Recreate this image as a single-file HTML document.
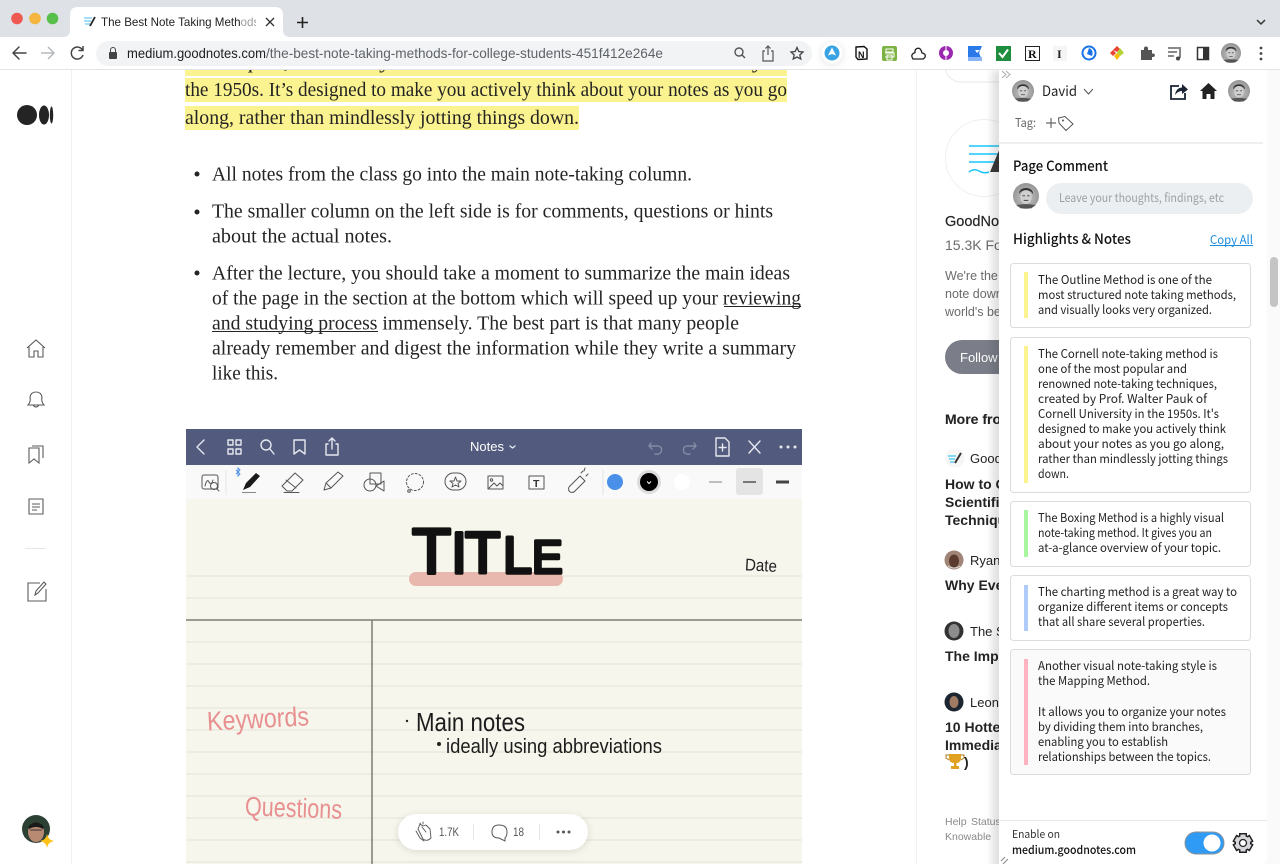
<!DOCTYPE html>
<html><head><meta charset="utf-8"><title>The Best Note Taking Methods</title>
<style>html,body{margin:0;padding:0;background:#fff;width:1280px;height:864px;overflow:hidden}svg{display:block}
text{font-family:"Liberation Sans",sans-serif}
.s text,text.s{font-family:"Liberation Serif",serif;font-size:20px;fill:#242424}
.k text,text.k{font-family:"Noto Sans CJK KR","Liberation Sans",sans-serif}
.i{fill:none;stroke:#5b5b5b;stroke-width:1.1}
.w{fill:none;stroke:#e6e8ef;stroke-width:1.4;stroke-linecap:round;stroke-linejoin:round}
.t{fill:none;stroke:#555;stroke-width:1;stroke-linecap:round;stroke-linejoin:round}
.c{fill:none;stroke:#444;stroke-width:1.5;stroke-linecap:round;stroke-linejoin:round}
.h{paint-order:stroke;stroke:#f6f6ec;stroke-width:.5}
</style></head><body>
<svg width="1280" height="864" viewBox="0 0 1280 864" xmlns="http://www.w3.org/2000/svg">
<defs>
<radialGradient id="fg" cx=".5" cy=".55" r=".6"><stop offset="0" stop-color="#c8c8c8"/><stop offset="1" stop-color="#8f8f8f"/></radialGradient>
<g id="face"><circle r="1" fill="url(#fg)"/><path d="M-.52-.15C-.6-.75.55-.78.55-.15L.42-.3C.2-.5-.2-.5-.42-.3Z" fill="#333"/><ellipse cy=".08" rx=".44" ry=".52" fill="#cfcfcf"/><path d="M-.28-.02H-.08M.08-.02H.28M-.18.34H.18" stroke="#555" stroke-width=".08" fill="none"/><path d="M-.75.7Q0 .55.75.7L.4.95H-.4Z" fill="#555"/></g>
<clipPath id="pc"><rect x="0" y="70" width="999" height="794"/></clipPath>
<clipPath id="ic"><rect x="186" y="429" width="616" height="435"/></clipPath>
<clipPath id="tc"><rect x="100" y="10" width="156" height="24"/></clipPath>
<filter id="sh" x="-20%" y="-20%" width="140%" height="140%"><feGaussianBlur stdDeviation="4"/></filter>
</defs>

<!-- article -->
<rect width="1280" height="864" fill="#fff"/>
<rect x="185" y="52" width="602" height="24" fill="#fbf38f"/><rect x="185" y="78" width="602" height="24" fill="#fbf38f"/><rect x="185" y="106" width="394" height="24" fill="#fbf38f"/>
<g class="s">
<text x="185" y="68" textLength="602" lengthAdjust="spacingAndGlyphs">techniques, created by Prof. Walter Pauk of Cornell University in</text>
<text x="185" y="96" textLength="602" lengthAdjust="spacingAndGlyphs">the 1950s. It’s designed to make you actively think about your notes as you go</text>
<text x="185" y="124" textLength="394" lengthAdjust="spacingAndGlyphs">along, rather than mindlessly jotting things down.</text>
<text x="212" y="180.500" textLength="480" lengthAdjust="spacingAndGlyphs">All notes from the class go into the main note-taking column.</text>
<text x="212" y="217.500" textLength="561" lengthAdjust="spacingAndGlyphs">The smaller column on the left side is for comments, questions or hints</text>
<text x="212" y="242.500" textLength="180" lengthAdjust="spacingAndGlyphs">about the actual notes.</text>
<text x="212" y="279.500" textLength="578" lengthAdjust="spacingAndGlyphs">After the lecture, you should take a moment to summarize the main ideas</text>
<text x="212" y="304.500" textLength="589" lengthAdjust="spacingAndGlyphs">of the page in the section at the bottom which will speed up your reviewing</text>
<text x="212" y="329.500" textLength="527" lengthAdjust="spacingAndGlyphs">and studying process immensely. The best part is that many people</text>
<text x="212" y="354.500" textLength="584" lengthAdjust="spacingAndGlyphs">already remember and digest the information while they write a summary</text>
<text x="212" y="379.500" textLength="66" lengthAdjust="spacingAndGlyphs">like this.</text>
</g>
<path d="M724 306.500H801M212 331.500H378" stroke="#242424" stroke-width="1"/>
<circle cx="197" cy="174" r="2.500" fill="#242424"/><circle cx="197" cy="212" r="2.500" fill="#242424"/><circle cx="197" cy="273" r="2.500" fill="#242424"/>

<!-- left rail -->
<rect x="71" y="70" width="1" height="794" fill="#f0f0f0"/>
<circle cx="27" cy="115" r="10" fill="#242424"/><ellipse cx="44" cy="115" rx="5" ry="9.500" fill="#242424"/><ellipse cx="51.500" cy="115" rx="1.700" ry="8.500" fill="#242424"/>
<path class="i" d="M27 348L36 340L45 348M29 346V357H34V351H38V357H43V346"/>
<path class="i" d="M28 405Q31 402 30 397Q31 392 36 392Q41 392 42 397Q41 402 44 405ZM33 405Q36 409 39 405"/>
<path class="i" d="M29 448H39V463L34 459L29 463ZM32 446H43V458"/>
<path class="i" d="M29 499H43V514H29ZM32 504H40M32 507H40M32 510H37"/>
<rect x="25" y="548" width="21" height="1" fill="#e6e6e6"/>
<path class="i" d="M40 583H28V601H46V589M35 595L36 591L44 582L46 584L38 593Z"/>
<circle cx="36" cy="829" r="14" fill="#2c4034"/><ellipse cx="36" cy="832" rx="8" ry="10" fill="#b98a72"/><path d="M28 827Q36 817 44 827L43 829Q36 825 29 829Z" fill="#1a1a1a"/><path d="M30 830H42" stroke="#333"/><path d="M47 834Q48 840 54 841Q48 842 47 848Q46 842 40 841Q46 840 47 834Z" fill="#ffc017"/>

<!-- note image -->
<g clip-path="url(#ic)">
<rect x="186" y="429" width="616" height="36" fill="#525b7d"/>
<rect x="186" y="465" width="616" height="34" fill="#f9f9f9"/>
<rect x="186" y="499" width="616" height="365" fill="#f6f6ec"/>
<path d="M186 576H802M186 598H802M186 642H802M186 664H802M186 686H802M186 708H802M186 730H802M186 752H802M186 774H802M186 796H802M186 818H802M186 840H802M186 862H802" stroke="#e8e8de" stroke-width="1.500"/>
<path d="M186 620H802" stroke="#7d7d75" stroke-width="1.500"/><path d="M372 620V864" stroke="#7d7d75" stroke-width="1.500"/>
<rect x="409" y="572" width="154" height="14" rx="7" fill="#e8b8ae"/>
<text y="573" fill="#111" stroke="#111" stroke-width="3.500" stroke-linejoin="round"><tspan x="412" font-size="64">T</tspan><tspan x="451" font-size="58">I</tspan><tspan x="465" font-size="58">T</tspan><tspan x="503" font-size="52">L</tspan><tspan x="532" font-size="46">E</tspan></text>
<text x="745" y="571" textLength="32" lengthAdjust="spacingAndGlyphs" font-size="17" fill="#222" class="h" transform="rotate(3 760 565)">Date</text>
<text x="207" y="728" textLength="102" lengthAdjust="spacingAndGlyphs" font-size="27" fill="#e88f90" class="h" transform="rotate(-3 258 720)">Keywords</text>
<text x="245" y="817" textLength="97" lengthAdjust="spacingAndGlyphs" font-size="27" fill="#e88f90" class="h" transform="rotate(2 293 810)">Questions</text>
<circle cx="407" cy="721" r="1.200" fill="#222"/>
<text x="416" y="731" textLength="109" lengthAdjust="spacingAndGlyphs" font-size="26" fill="#1c1c1c" class="h">Main notes</text>
<circle cx="439" cy="744" r="2" fill="#222"/>
<text x="446" y="753" textLength="216" lengthAdjust="spacingAndGlyphs" font-size="20" fill="#1c1c1c" class="h">ideally using abbreviations</text>
<!-- header icons -->
<path class="w" d="M204 440L197 447L204 454"/>
<path class="w" d="M228 440H233V445H228ZM236 440H241V445H236ZM228 449H233V454H228ZM236 449H241V454H236Z"/>
<circle class="w" cx="266" cy="445" r="5"/><path class="w" d="M270 449L274 454"/>
<path class="w" d="M294 440H305V454L299.500 450L294 454Z" /><path class="w" d="M332 438V449M329 441L332 438L335 441M328 444H326V455H338V444H336"/>
<text x="470" y="451" font-size="12.500" fill="#fff" textLength="34" lengthAdjust="spacingAndGlyphs">Notes</text><path class="w" d="M510 446L512.500 448L515 446" stroke-width="1"/>
<path class="w" d="M651 443L649 446L652 449M649 446H658Q663 447 661 452Q659 455 655 454" style="stroke:#858ca6"/>
<path class="w" d="M694 443L696 446L693 449M696 446H687Q682 447 684 452Q686 455 690 454" style="stroke:#858ca6"/>
<path class="w" d="M716 438H725L729 442V456H716ZM722.500 444V451M719 447.500H726"/>
<path class="w" d="M749 441L760 453M760 441L749 453"/>
<circle cx="781" cy="447" r="1.500" fill="#e6e8ef"/><circle cx="788" cy="447" r="1.500" fill="#e6e8ef"/><circle cx="795" cy="447" r="1.500" fill="#e6e8ef"/>
<!-- tool icons -->
<rect x="202" y="475" width="16" height="14" rx="2" class="t"/><path d="M205 486Q207 478 209 482T213 480" class="t" stroke-width="1.500"/><circle cx="214" cy="486" r="3.500" class="t" fill="#f9f9f9"/><path class="t" d="M216.500 488.500L219 491"/>
<path d="M236 470L240 474L238 476V468L240 470L236 474" stroke="#4a90e2" stroke-width=".9" fill="none"/>
<path d="M243 490L246 483L256 473L260 476L250 487Z" fill="#1a1a1a"/><path d="M242 492.500H256" stroke="#888"/>
<path class="t" d="M282 486L295 473L303 480L292 491H287ZM286 480L296 488M284 492.500H299"/>
<path class="t" d="M324 490L326 483L338 472L343 476L331 488ZM326 483L331 488"/>
<rect class="t" x="370" y="473" width="11" height="11"/><circle class="t" cx="370" cy="485" r="6" fill="#f9f9f9"/><path class="t" d="M384 481L376 486L384 491Z"/>
<circle class="t" cx="415" cy="482" r="8.500" stroke-dasharray="2 2"/><circle class="t" cx="409" cy="491" r="1.300"/>
<rect class="t" x="445" y="473" width="21" height="17" rx="8.500"/><path class="t" d="M455.500 477L457 481H461L458 483.500L459 487L455.500 485L452 487L453 483.500L450 481H454Z"/>
<rect class="t" x="488" y="476" width="15" height="13"/><circle class="t" cx="491.500" cy="480" r="1.200"/><path class="t" d="M489 488L494 483L497 486L500 483L503 486"/>
<rect class="t" x="529" y="476" width="15" height="13"/><text x="533" y="487" font-size="10.500" font-weight="700" fill="#333">T</text>
<path class="t" d="M569 487L580 476L585 481L574 492Q571 493 569.500 491.500Q568 490 569 487ZM581 473L583 471M586 476L588 474M584 471L585 468"/>
<path d="M603 470V495" stroke="#e4e4e4"/><path d="M226 470V495" stroke="#e8e8e8"/>
<circle cx="615" cy="482" r="8" fill="#4a90e8"/>
<circle cx="649" cy="482" r="12" fill="#dcdcdc"/><circle cx="649" cy="482" r="9" fill="#000"/><path d="M647 481.500L649 483.500L651 481.500" stroke="#fff" fill="none"/>
<circle cx="682" cy="482" r="8" fill="#fff"/>
<path d="M709 482H722" stroke="#aaa" stroke-width="1.500"/>
<rect x="736" y="468" width="27" height="27" rx="3" fill="#e4e4e4"/><path d="M743 482H756" stroke="#777" stroke-width="2"/>
<path d="M776 482H789" stroke="#444" stroke-width="3"/>
</g>
<!-- clap bar -->
<rect x="398" y="816" width="190" height="35" rx="17.500" fill="#000" opacity=".12" filter="url(#sh)"/>
<rect x="398" y="814" width="190" height="36" rx="18" fill="#fff"/>
<path d="M418 829L423 839Q427 842 431 838L430 829L426 825L423 826L420 824ZM422 827L426 832M416 831L420 838L424 841M423 822V824M420 823L421 825" fill="none" stroke="#555" stroke-width=".9" stroke-linecap="round" stroke-linejoin="round"/>
<text x="439" y="836" font-size="11.500" fill="#555" textLength="20" lengthAdjust="spacingAndGlyphs">1.7K</text>
<path d="M473.500 824V840M539.500 824V840" stroke="#e6e6e6"/>
<path d="M499 838Q492 838 492 832Q492 825 499 825Q507 825 507 832Q507 836 505 838L505 841Z" fill="none" stroke="#555"/>
<text x="513" y="836" font-size="11.500" fill="#555" textLength="11" lengthAdjust="spacingAndGlyphs">18</text>
<circle cx="558" cy="832" r="1.500" fill="#555"/><circle cx="563.500" cy="832" r="1.500" fill="#555"/><circle cx="569" cy="832" r="1.500" fill="#555"/>

<!-- right sidebar -->
<rect x="916" y="70" width="1" height="794" fill="#f0f0f0"/>
<rect x="945" y="50" width="70" height="32" rx="16" fill="none" stroke="#e8e8e8"/>
<circle cx="984" cy="158" r="38.500" fill="#fff" stroke="#efefef"/>
<path d="M969 146H1000M969 154H1000M969 162H996M969 172Q974 168 979 171T989 172" stroke="#19c5fb" stroke-width="1.500" fill="none"/>
<path d="M990 172L1000 148V172Z" fill="#3a3a3a"/>
<g fill="#242424">
<text x="945" y="226" font-size="14.500" stroke="#242424" stroke-width=".2">GoodNotes</text>
<text x="945" y="250" font-size="14" fill="#6b6b6b">15.3K Followers</text>
<text x="945" y="280" font-size="12.500" fill="#6b6b6b">We're the</text>
<text x="945" y="298" font-size="12.500" fill="#6b6b6b">note down</text>
<text x="945" y="316" font-size="12.500" fill="#6b6b6b">world's best</text>
<rect x="945" y="340" width="90" height="34" rx="17" fill="#7b7e89"/>
<text x="960" y="362" font-size="13" fill="#fff">Follow</text>
<text x="945" y="424" font-size="14" font-weight="700" stroke="#242424" stroke-width=".1">More from</text>
<circle cx="955" cy="458" r="9.500" fill="#f6f6f6"/><path d="M948 456H956M949 459H955M950 462H954" stroke="#3cc8f5" stroke-width="1.200"/><path d="M955 463L961 453" stroke="#333" stroke-width="2"/>
<text x="970" y="463" font-size="13">GoodNotes</text>
<text x="945" y="489" font-size="14" font-weight="700">How to Get</text>
<text x="945" y="507" font-size="14" font-weight="700">Scientific</text>
<text x="945" y="525" font-size="14" font-weight="700">Techniques</text>
<circle cx="954" cy="560" r="9.500" fill="#a08576"/><ellipse cx="954" cy="561" rx="5" ry="6.500" fill="#5a3b2e"/><path d="M948 566Q954 570 960 566" stroke="#ddd" fill="none"/>
<text x="970" y="565" font-size="13">Ryan Holiday</text>
<text x="945" y="590" font-size="14" font-weight="700">Why Every</text>
<circle cx="954" cy="631" r="9.500" fill="#333"/><ellipse cx="954" cy="631" rx="5.500" ry="7" fill="#8d8d8d"/>
<text x="970" y="636" font-size="13">The Science</text>
<text x="945" y="661" font-size="14" font-weight="700">The Impact</text>
<circle cx="954" cy="702" r="9.500" fill="#1c2530"/><ellipse cx="954" cy="702" rx="4.500" ry="6" fill="#a17a64"/>
<text x="970" y="707" font-size="13">Leon Zhang</text>
<text x="945" y="732" font-size="14" font-weight="700">10 Hottest</text>
<text x="945" y="750" font-size="14" font-weight="700">Immediately</text>
<path d="M949 754H961V759Q960 763 956.500 763V766H959V769H951V766H954V763Q950 763 949 759Z" fill="#e0a020"/><path d="M949 755H946V758L949 760M961 755H964V758L961 760" stroke="#a87718" fill="none"/>
<text x="964" y="767" font-size="14" font-weight="700">)</text>
<text x="945" y="825" font-size="10.500" fill="#8a8a8a">Help</text><text x="971" y="825" font-size="10.500" fill="#8a8a8a">Status</text>
<text x="945" y="840" font-size="10.500" fill="#8a8a8a">Knowable</text>
</g>

<!-- right gutter + scrollbar -->
<rect x="1263" y="70" width="17" height="794" fill="#fafafa"/>
<rect x="1270" y="257" width="8" height="50" rx="4" fill="#c4c4c4"/>

<!-- extension panel -->
<rect x="992" y="70" width="275" height="800" fill="#000" opacity=".12" filter="url(#sh)" clip-path="url(#pc)"/>
<path d="M999 70H1267V858Q1267 864 1261 864H999Z" fill="#fff"/>
<path d="M1002 71L1006 74.500L1002 78M1006 71L1010 74.500L1006 78" fill="none" stroke="#aaa"/>
<use href="#face" transform="translate(1023 91) scale(11)"/>
<text class="k" x="1042" y="96" font-size="14" fill="#222" textLength="35" lengthAdjust="spacingAndGlyphs">David</text>
<path d="M1084 89L1088.500 94L1093 89" fill="none" stroke="#555"/>
<path d="M1179 86H1171V99H1185V93" fill="none" stroke="#1a2433" stroke-width="1.800"/><path d="M1175 95Q1176 88 1182 87.500V84L1188 89.500L1182 94V91Q1178 91 1175 95Z" fill="#1a2433"/>
<path d="M1208.500 83L1217 91H1214.500V99H1210.500V94H1206.500V99H1202.500V91H1200Z" fill="#222"/>
<use href="#face" transform="translate(1239 91) scale(11)"/>
<text class="k" x="1015" y="127" font-size="12" fill="#666" textLength="21" lengthAdjust="spacingAndGlyphs">Tag:</text>
<path d="M1046 123H1056M1051 118V128" stroke="#666" stroke-width="1.200"/>
<path d="M1058.500 118L1065 116.500L1073 124L1066 130.500L1059 123Z" fill="none" stroke="#555"/><circle cx="1063" cy="120.500" r="1" fill="#555"/>
<rect x="999" y="142" width="264" height="2" fill="#efefef"/>
<text class="k" x="1013" y="171" font-size="14" font-weight="500" fill="#111" textLength="95" lengthAdjust="spacingAndGlyphs">Page Comment</text>
<use href="#face" transform="translate(1026 196) scale(13)"/>
<rect x="1046" y="183" width="207" height="31" rx="15.500" fill="#eceff1"/>
<text class="k" x="1059" y="202" font-size="12" fill="#9aa0a6" textLength="165" lengthAdjust="spacingAndGlyphs">Leave your thoughts, findings, etc</text>
<text class="k" x="1013" y="244" font-size="14" font-weight="500" fill="#111" textLength="118" lengthAdjust="spacingAndGlyphs">Highlights &amp; Notes</text>
<text class="k" x="1210" y="244" font-size="12" fill="#1a8cdf" textLength="43" lengthAdjust="spacingAndGlyphs">Copy All</text>
<path d="M1210 245.500H1253" stroke="#1a8cdf"/>

<g stroke="#dcdcdc" fill="#fff">
<rect x="1010.500" y="263.500" width="240" height="64" rx="3"/>
<rect x="1010.500" y="337.500" width="240" height="155" rx="3"/>
<rect x="1010.500" y="501.500" width="240" height="65" rx="3"/>
<rect x="1010.500" y="575.500" width="240" height="65" rx="3"/>
<rect x="1010.500" y="649.500" width="240" height="125" rx="3" fill="#fafafa"/>
</g>
<rect x="1024" y="272" width="4" height="46" fill="#fbf38f"/>
<rect x="1024" y="346" width="4" height="137" fill="#fbf38f"/>
<rect x="1024" y="510" width="4" height="47" fill="#a8f5a0"/>
<rect x="1024" y="585" width="4" height="46" fill="#aecbfa"/>
<rect x="1024" y="659" width="4" height="106" fill="#ffb3c0"/>
<g class="k" font-size="12" fill="#222">
<text x="1038" y="284" textLength="174" lengthAdjust="spacingAndGlyphs">The Outline Method is one of the</text>
<text x="1038" y="299" textLength="198" lengthAdjust="spacingAndGlyphs">most structured note taking methods,</text>
<text x="1038" y="314" textLength="174" lengthAdjust="spacingAndGlyphs">and visually looks very organized.</text>
<text x="1038" y="358" textLength="180" lengthAdjust="spacingAndGlyphs">The Cornell note-taking method is</text>
<text x="1038" y="373" textLength="149" lengthAdjust="spacingAndGlyphs">one of the most popular and</text>
<text x="1038" y="388" textLength="179" lengthAdjust="spacingAndGlyphs">renowned note-taking techniques,</text>
<text x="1038" y="403" textLength="169" lengthAdjust="spacingAndGlyphs">created by Prof. Walter Pauk of</text>
<text x="1038" y="418" textLength="181" lengthAdjust="spacingAndGlyphs">Cornell University in the 1950s. It's</text>
<text x="1038" y="433" textLength="188" lengthAdjust="spacingAndGlyphs">designed to make you actively think</text>
<text x="1038" y="448" textLength="186" lengthAdjust="spacingAndGlyphs">about your notes as you go along,</text>
<text x="1038" y="463" textLength="190" lengthAdjust="spacingAndGlyphs">rather than mindlessly jotting things</text>
<text x="1038" y="478" textLength="31" lengthAdjust="spacingAndGlyphs">down.</text>
<text x="1038" y="522" textLength="186" lengthAdjust="spacingAndGlyphs">The Boxing Method is a highly visual</text>
<text x="1038" y="537" textLength="174" lengthAdjust="spacingAndGlyphs">note-taking method. It gives you an</text>
<text x="1038" y="552" textLength="183" lengthAdjust="spacingAndGlyphs">at-a-glance overview of your topic.</text>
<text x="1038" y="596" textLength="199" lengthAdjust="spacingAndGlyphs">The charting method is a great way to</text>
<text x="1038" y="611" textLength="190" lengthAdjust="spacingAndGlyphs">organize different items or concepts</text>
<text x="1038" y="626" textLength="167" lengthAdjust="spacingAndGlyphs">that all share several properties.</text>
<text x="1038" y="670" textLength="179" lengthAdjust="spacingAndGlyphs">Another visual note-taking style is</text>
<text x="1038" y="685" textLength="112" lengthAdjust="spacingAndGlyphs">the Mapping Method.</text>
<text x="1038" y="716" textLength="188" lengthAdjust="spacingAndGlyphs">It allows you to organize your notes</text>
<text x="1038" y="731" textLength="165" lengthAdjust="spacingAndGlyphs">by dividing them into branches,</text>
<text x="1038" y="746" textLength="130" lengthAdjust="spacingAndGlyphs">enabling you to establish</text>
<text x="1038" y="761" textLength="173" lengthAdjust="spacingAndGlyphs">relationships between the topics.</text>
</g>
<rect x="999" y="820" width="268" height="1" fill="#e8e8e8"/>
<text class="k" x="1012" y="838" font-size="11" fill="#333" textLength="48" lengthAdjust="spacingAndGlyphs">Enable on</text>
<text class="k" x="1012" y="854" font-size="11.500" font-weight="500" fill="#111" textLength="124" lengthAdjust="spacingAndGlyphs">medium.goodnotes.com</text>
<rect x="1185" y="832" width="39" height="22" rx="11" fill="#2f9bf5" stroke="#8a9199"/><circle cx="1212" cy="843" r="8.500" fill="#fff"/>
<g transform="translate(1243 843)">
<g fill="#222" stroke="#222" stroke-width="3"><circle r="7"/><rect x="-2.500" y="-8.500" width="5" height="3" transform="rotate(0)"/><rect x="-2.500" y="-8.500" width="5" height="3" transform="rotate(60)"/><rect x="-2.500" y="-8.500" width="5" height="3" transform="rotate(120)"/><rect x="-2.500" y="-8.500" width="5" height="3" transform="rotate(180)"/><rect x="-2.500" y="-8.500" width="5" height="3" transform="rotate(240)"/><rect x="-2.500" y="-8.500" width="5" height="3" transform="rotate(300)"/></g>
<g fill="#d6d7da"><circle r="7"/><rect x="-2.500" y="-8.500" width="5" height="3"/><rect x="-2.500" y="-8.500" width="5" height="3" transform="rotate(60)"/><rect x="-2.500" y="-8.500" width="5" height="3" transform="rotate(120)"/><rect x="-2.500" y="-8.500" width="5" height="3" transform="rotate(180)"/><rect x="-2.500" y="-8.500" width="5" height="3" transform="rotate(240)"/><rect x="-2.500" y="-8.500" width="5" height="3" transform="rotate(300)"/></g>
<circle r="3.500" fill="#fff" stroke="#222" stroke-width="1.300"/></g>
<path d="M1001 861L1005 857M1003 864L1008 859" stroke="#888"/>

<!-- browser chrome -->
<rect width="1280" height="37" fill="#dee1e6"/>
<rect y="37" width="1280" height="33" fill="#fff"/><rect y="69" width="1280" height="1" fill="#e3e4e6"/>
<circle cx="17" cy="18.500" r="5.800" fill="#ee5a52"/><circle cx="35" cy="18.500" r="5.800" fill="#f5b63f"/><circle cx="52.500" cy="18.500" r="5.800" fill="#58c04a"/>
<path d="M63 37Q70 37 70 30V15Q70 7 78 7H275Q283 7 283 15V30Q283 37 290 37Z" fill="#fff"/>
<path d="M84 18H92M84 21H91M85 24H90" stroke="#6cc9f3" stroke-width="1.300"/><path d="M90 26L95 17" stroke="#222" stroke-width="1.800"/>
<text x="101" y="26" font-size="12" fill="#222" clip-path="url(#tc)" textLength="175" lengthAdjust="spacingAndGlyphs">The Best Note Taking Methods for</text>
<rect x="240" y="10" width="16" height="24" fill="#fff" opacity=".55"/>
<path d="M266 18L274 26M274 18L266 26" stroke="#333" stroke-width="1.300"/>
<path d="M297 22.500H308M302.500 17V28" stroke="#222" stroke-width="1.600"/>
<path d="M1257 20L1261 24L1265 20" fill="none" stroke="#333" stroke-width="1.500"/>
<path d="M26 53H13M19 47L13 53L19 59" class="c" stroke-width="1.600"/>
<path d="M54 53H41M48 47L54 53L48 59" fill="none" stroke="#b5b8bb" stroke-width="1.500"/>
<path d="M82.500 50A6 6 0 1 0 83 55M83 46V50.500H78.500" fill="none" stroke="#444" stroke-width="1.500"/>
<rect x="96" y="41" width="716" height="25" rx="12.500" fill="#f1f3f4"/>
<rect x="109" y="52" width="8" height="7" rx="1" fill="#444"/><path d="M110.500 52V50A2.500 2.500 0 0 1 115.500 50V52" fill="none" stroke="#444"/>
<text x="127" y="58" font-size="14" fill="#202124" textLength="139" lengthAdjust="spacingAndGlyphs">medium.goodnotes.com</text>
<text x="266" y="58" font-size="14" fill="#5f6368" textLength="397" lengthAdjust="spacingAndGlyphs">/the-best-note-taking-methods-for-college-students-451f412e264e</text>
<circle cx="739" cy="52" r="4" fill="none" stroke="#555" stroke-width="1.400"/><path d="M742 55L745 58" stroke="#555" stroke-width="1.500"/>
<path d="M765 51H763V61H773V51H771M768 55V46M765.500 48.500L768 46L770.500 48.500" fill="none" stroke="#555" stroke-width="1.200"/>
<path d="M797 47.500L798.800 51.500L803 52L799.800 55L800.800 59L797 57L793.200 59L794.200 55L791 52L795.200 51.500Z" fill="none" stroke="#444" stroke-width="1.300"/>
<circle cx="832" cy="54" r="11" fill="#000" opacity=".1" filter="url(#sh)"/><circle cx="832" cy="53" r="10.500" fill="#fff"/>
<circle cx="832" cy="53" r="7.500" fill="#3aa3e3"/><path d="M832 47.500L836 55.500L832 54L828 55.500Z" fill="#fff"/>
<path d="M856 47L864 46.500L867 49V59L858 59.500L856 57Z" fill="#fff" stroke="#111" stroke-width="1.400"/><text x="858" y="58" font-size="9" font-weight="700" fill="#111">N</text>
<rect x="882" y="46" width="15" height="15" rx="2" fill="#7cb342"/><path d="M886 49H893V52H886ZM885 53H894V57H885M887 55H892V60H887Z" fill="none" stroke="#fff"/>
<path d="M913 59H923Q926 57.500 925 54.500Q923.500 53 922 53Q920.500 47 917 48.500Q914.500 49.500 915 52.500Q911 54 912 57Z" fill="none" stroke="#222" stroke-width="1.300"/>
<circle cx="946" cy="53" r="7" fill="#9c27b0"/><circle cx="946" cy="53" r="3" fill="#fff"/><path d="M946 46V60" stroke="#fff"/>
<path d="M968 46H982L979 53L982 60H968Z" fill="#2979e8"/><path d="M968 57H982V61H968Z" fill="#8ab4f8"/><path d="M975 50H980L977 53Z" fill="#fff"/>
<rect x="996" y="46" width="15" height="15" fill="#1e8e3e"/><path d="M999 53L1002.500 57L1008 49.500" fill="none" stroke="#fff" stroke-width="2"/>
<rect x="1025.500" y="46.500" width="14" height="14" fill="#fff" stroke="#222"/><text x="1028" y="58" font-size="12" font-weight="700" fill="#111" style="font-family:'Liberation Serif',serif">R</text>
<rect x="1053" y="46" width="14" height="15" fill="#f5f5f5"/><text x="1057" y="58" font-size="12" font-weight="700" fill="#222" style="font-family:'Liberation Serif',serif">I</text>
<circle cx="1089" cy="53" r="6.500" fill="#fff" stroke="#1a73e8" stroke-width="2"/><path d="M1089 48Q1094 50 1092 56L1087 54Z" fill="#1a73e8"/>
<path d="M1117 46L1124 53L1117 60L1110 53Z" fill="#fff"/><path d="M1117 46L1120 49L1117 52L1113 50Z" fill="#ea4335"/><path d="M1120 48L1124 53L1120 56L1117 53Z" fill="#b5d334"/><path d="M1117 53L1120 56L1117 60L1114 56Z" fill="#fbbc05"/><path d="M1110 53L1113 50L1116 53L1113 56Z" fill="#ea4335"/>
<path d="M1141 50H1144V48.500A1.800 1.800 0 0 1 1148 48.500V50H1152V53.500H1153.500A1.800 1.800 0 0 1 1153.500 57H1152V60H1141Z" fill="#555"/>
<path d="M1168 48H1179M1168 52H1177M1168 56H1174M1180 47V58" stroke="#444" stroke-width="1.300"/><circle cx="1178" cy="58.500" r="2" fill="#444"/>
<rect x="1197.500" y="47.500" width="11" height="12" fill="#fff" stroke="#333" stroke-width="1.500"/><rect x="1203" y="47" width="6" height="13" fill="#333"/>
<use href="#face" transform="translate(1231 53) scale(10)"/>
<circle cx="1261" cy="48" r="1.400" fill="#444"/><circle cx="1261" cy="53.500" r="1.400" fill="#444"/><circle cx="1261" cy="59" r="1.400" fill="#444"/>
</svg>
</body></html>
